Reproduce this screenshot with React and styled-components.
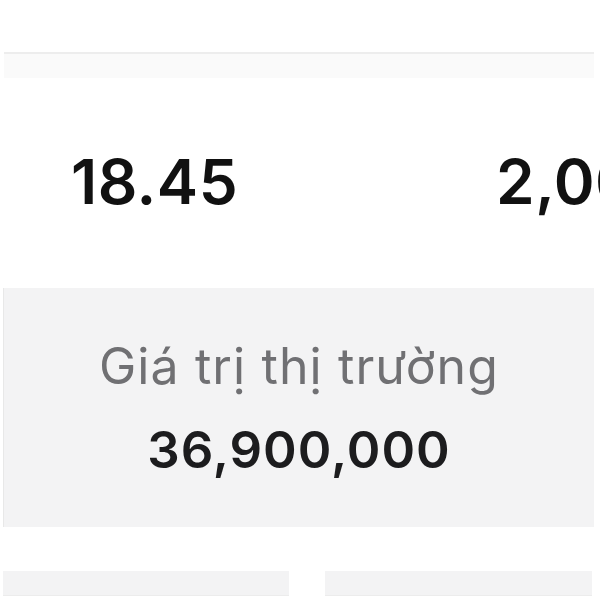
import React from "react";
import styled, { createGlobalStyle } from "styled-components";

const Global = createGlobalStyle`
  html, body { margin: 0; padding: 0; background: #ffffff; }
  body { width: 600px; height: 600px; overflow: hidden; font-family: Inter, "Liberation Sans", sans-serif; }
  #root { width: 600px; height: 600px; }
`;

const Screen = styled.div`
  width: 600px;
  height: 600px;
  display: flex;
  flex-direction: column;
  background: #ffffff;
  overflow: hidden;
`;

const TopSpace = styled.div`
  height: 52px;
  background: #ffffff;
`;

const Divider = styled.div`
  margin: 0 6px 0 4px;
  height: 2px;
  background: #ededed;
`;

const Band = styled.div`
  margin: 0 6px 0 4px;
  height: 24px;
  background: #fafafa;
`;

const StatsRow = styled.div`
  height: 210px;
  display: grid;
  grid-template-columns: 425px max-content;
  align-items: center;
  padding-left: 71px;
  white-space: nowrap;
`;

const StatValue = styled.div`
  font-size: 62px;
  font-weight: 600;
  color: #111111;
  letter-spacing: 0.5px;
  line-height: 1;
  padding-bottom: 2px;
`;

const Panel = styled.div`
  margin: 0 6px 0 3px;
  height: 239px;
  background: #f3f3f4;
  border-left: 1px solid #e8e8e8;
  display: flex;
  flex-direction: column;
  align-items: center;
  justify-content: center;
  gap: 33px;
  padding-top: 1px;
  box-sizing: border-box;
`;

const Label = styled.div`
  font-size: 50px;
  font-weight: 400;
  color: #707073;
  letter-spacing: 1.1px;
  line-height: 1;
`;

const Amount = styled.div`
  font-size: 51px;
  font-weight: 600;
  color: #1c1c1e;
  letter-spacing: 1px;
  line-height: 1;
`;

const Gap = styled.div`
  height: 44px;
`;

const BottomRow = styled.div`
  flex: 1;
  margin: 0 7px 0 3px;
  display: grid;
  grid-template-columns: 286px 267px;
  column-gap: 36px;
  padding-bottom: 4px;
`;

const Card = styled.div`
  background: #f3f3f4;
  border-bottom: 1px solid #ececec;
`;

export default function App() {
  return (
    <>
      <Global />
      <Screen>
        <TopSpace />
        <Divider />
        <Band />
        <StatsRow>
          <StatValue>18.45</StatValue>
          <StatValue>2,000,000</StatValue>
        </StatsRow>
        <Panel>
          <Label>Giá trị thị trường</Label>
          <Amount>36,900,000</Amount>
        </Panel>
        <Gap />
        <BottomRow>
          <Card />
          <Card />
        </BottomRow>
      </Screen>
    </>
  );
}
